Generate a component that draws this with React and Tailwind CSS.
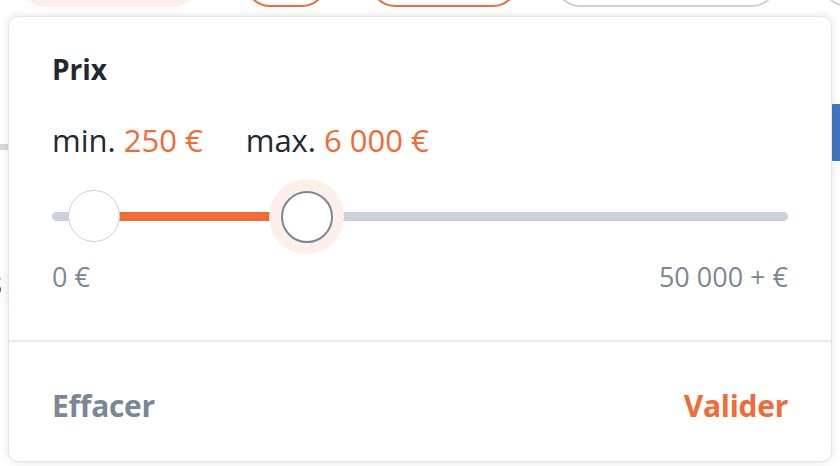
export default function App() {
    return (
        <div className="relative h-[466px] w-[840px] overflow-hidden bg-white" style={{ fontFamily: '"Open Sans", sans-serif' }}>
            {/* Page behind the popover */}
            <div className="flex items-end -mt-[43px] h-[50px]">
                <div className="ml-[20px] h-[50px] w-[177px] shrink-0 rounded-b-[24px] bg-[#fdf0eb]" />
                <div className="ml-[48px] h-[50px] w-[82px] shrink-0 rounded-full border-2 border-[#f26b36]" />
                <div className="ml-[43px] h-[50px] w-[148px] shrink-0 rounded-full border-2 border-[#f26b36]" />
                <div className="ml-[37px] h-[50px] w-[222px] shrink-0 rounded-full border-2 border-[#cbd2d9]" />
                <div className="ml-[45px] h-[50px] w-[80px] shrink-0 rounded-full border-2 border-[#cbd2d9]" />
            </div>
            <div className="mt-[97px] flex justify-between">
                <div className="mt-[40px] h-[6px] w-[10px] bg-[#d5d8dc]" />
                <div className="h-[57px] w-[10px] rounded-l-sm bg-[#3f77c6]" />
            </div>
            <div className="mt-[106px] -ml-[14px] text-[32px] font-bold leading-none text-[#1f2933]">s</div>

            {/* Price popover */}
            <div className="absolute left-[8px] top-[16px] flex h-[446px] w-[824px] flex-col rounded-[10px] border border-[#e6e6e6] bg-white shadow-[0_0_8px_rgba(0,0,0,0.12)]">
                <div className="px-[43px] pt-[34px]">
                    <h2 className="text-[28px] font-bold leading-[36px] text-[#1f2933]">Prix</h2>
                    <div className="mt-[33px] flex gap-[43px] text-[31px] leading-[40px] text-[#1f2933]">
                        <span>min. <span className="text-[#f26b36]">250 €</span></span>
                        <span>max. <span className="text-[#f26b36]">6 000 €</span></span>
                    </div>
                    <div className="relative mt-[19px] h-[76px]">
                        <div className="absolute left-0 right-0 top-[33px] h-[9px] rounded-full bg-[#cbd2d9]" />
                        <div className="absolute left-[42px] top-[33px] h-[9px] w-[212px] bg-[#f26b36]" />
                        <div className="absolute left-[16px] top-[11px] h-[52px] w-[52px] rounded-full border-[1.5px] border-[#cbd2d9] bg-white" />
                        <div className="absolute left-[217px] top-0 flex h-[75px] w-[75px] items-center justify-center rounded-full bg-[#fdefe9]">
                            <div className="h-[52px] w-[52px] rounded-full border-2 border-[#7b8794] bg-white" />
                        </div>
                    </div>
                    <div className="mt-[4px] flex justify-between text-[27px] leading-[36px] text-[#7b8794]">
                        <span>0 €</span>
                        <span>50 000 + €</span>
                    </div>
                </div>
                <div className="mt-[45px] border-t-2 border-[#e9ebee]" />
                <div className="flex flex-1 items-center justify-between px-[43px] pt-[8px] text-[30px] font-bold tracking-[-0.3px]">
                    <button className="text-[#7b8794]">Effacer</button>
                    <button className="text-[#f26b36]">Valider</button>
                </div>
            </div>
        </div>
    )
}
